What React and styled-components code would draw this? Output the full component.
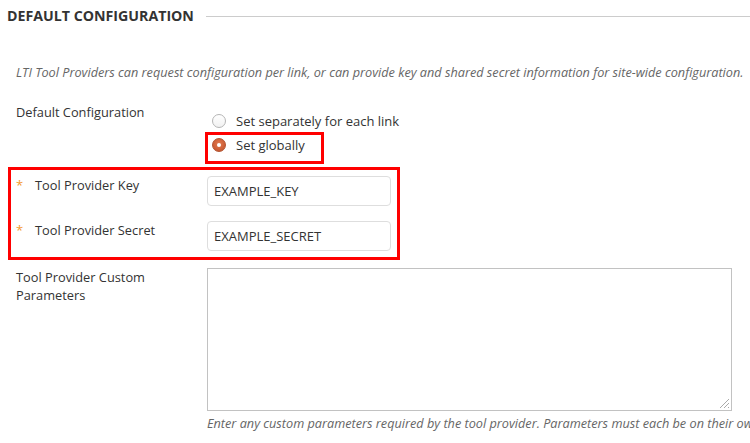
import React from "react";
import styled, { createGlobalStyle } from "styled-components";

const Global = createGlobalStyle`
  html, body { margin: 0; padding: 0; background: #fff; }
  body { font-family: "Open Sans", "Liberation Sans", sans-serif; color: #333; }
  * { box-sizing: border-box; }
`;

const Page = styled.div`
  width: 750px;
  height: 443px;
  overflow: hidden;
`;

const SectionHeader = styled.div`
  display: flex;
  align-items: center;
  padding: 6px 0 0 7px;
  height: 26px;
`;

const SectionTitle = styled.h2`
  margin: 0;
  font-size: 14.2px;
  font-weight: 700;
  line-height: 20px;
  color: #333;
  white-space: nowrap;
`;

const Rule = styled.div`
  flex: 1;
  height: 1px;
  background: #ccc;
  margin-left: 12px;
`;

const Description = styled.p`
  margin: 37px 0 0 16px;
  font-size: 12.7px;
  font-style: italic;
  line-height: 18px;
  color: #666;
  white-space: nowrap;
`;

const FieldRow = styled.div`
  display: flex;
  align-items: flex-start;
  margin-top: ${(p) => p.$top || 0}px;
  padding-left: ${(p) => (p.$inset ? 5 : 16)}px;
`;

const Label = styled.div`
  width: ${(p) => p.$width || 191}px;
  flex-shrink: 0;
  font-size: 12.8px;
  line-height: 18px;
  color: #333;
  padding-right: ${(p) => p.$pr || 0}px;
`;

const Required = styled.span`
  display: inline-block;
  width: 19px;
  color: #f39c2c;
  font-size: 13px;
`;

const RadioGroup = styled.div`
  display: flex;
  flex-direction: column;
  align-items: flex-start;
  margin-top: 8px;
`;

const Option = styled.label`
  display: flex;
  align-items: center;
  height: 20px;
  font-size: 13px;
  color: #333;
  padding-left: ${(p) => (p.$boxed ? 0 : 5)}px;
`;

const Radio = styled.span`
  width: 14px;
  height: 14px;
  border-radius: 50%;
  margin-right: 10px;
  flex-shrink: 0;
  position: relative;
  border: 1px solid ${(p) => (p.$checked ? "#b2522f" : "#b5b5b5")};
  background: ${(p) =>
    p.$checked
      ? "radial-gradient(circle at 50% 40%, #e07a50 0%, #cf6038 60%, #b9502c 100%)"
      : "linear-gradient(#ffffff, #f1f1f1)"};
  &::after {
    content: "";
    display: ${(p) => (p.$checked ? "block" : "none")};
    position: absolute;
    left: 50%;
    top: 50%;
    width: 4px;
    height: 4px;
    margin: -2px 0 0 -2px;
    border-radius: 50%;
    background: #fff;
  }
`;

const Highlight = styled.div`
  border: 3px solid #f00;
`;

const OptionBox = styled(Highlight)`
  width: 119px;
  margin-top: 1px;
  margin-left: -2px;
  padding: 0 0 6px 4px;
`;

const RequiredBox = styled(Highlight)`
  width: 392px;
  margin: 3px 0 0 8px;
  padding: 6px 0 6px 0;
  display: flex;
  flex-direction: column;
  gap: 15px;
`;

const TextInput = styled.div`
  width: 184px;
  height: 30px;
  border: 1px solid #dedede;
  border-radius: 4px;
  padding: 0 6px;
  display: flex;
  align-items: center;
  font-size: 13px;
  color: #333;
  background: #fff;
`;

const Field = styled.div`
  display: flex;
  flex-direction: column;
`;

const TextArea = styled.div`
  width: 525px;
  height: 143px;
  border: 1px solid #c2c2c2;
  position: relative;
  background: #fff;
`;

const Grip = styled.svg`
  position: absolute;
  right: 1px;
  bottom: 1px;
`;

const Help = styled.div`
  margin-top: 3px;
  font-size: 12.7px;
  font-style: italic;
  line-height: 18px;
  color: #666;
  white-space: nowrap;
`;

export default function App() {
  return (
    <Page>
      <Global />
      <SectionHeader>
        <SectionTitle>DEFAULT CONFIGURATION</SectionTitle>
        <Rule />
      </SectionHeader>
      <Description>
        LTI Tool Providers can request configuration per link, or can provide key and shared secret information for site-wide configuration.
      </Description>

      <FieldRow $top={22}>
        <Label>Default Configuration</Label>
        <RadioGroup>
          <Option>
            <Radio />
            Set separately for each link
          </Option>
          <OptionBox>
            <Option $boxed>
              <Radio $checked />
              Set globally
            </Option>
          </OptionBox>
        </RadioGroup>
      </FieldRow>

      <RequiredBox>
        <FieldRow $inset>
          <Label $width={191}>
            <Required>*</Required>Tool Provider Key
          </Label>
          <TextInput>EXAMPLE_KEY</TextInput>
        </FieldRow>
        <FieldRow $inset>
          <Label $width={191}>
            <Required>*</Required>Tool Provider Secret
          </Label>
          <TextInput>EXAMPLE_SECRET</TextInput>
        </FieldRow>
      </RequiredBox>

      <FieldRow $top={8}>
        <Label $pr={40}>Tool Provider Custom Parameters</Label>
        <Field>
          <TextArea>
            <Grip width="12" height="12" viewBox="0 0 12 12">
              <path d="M11 2 L2 11 M11 6 L6 11 M11 10 L10 11" stroke="#aaa" strokeWidth="1" fill="none" />
            </Grip>
          </TextArea>
          <Help>
            Enter any custom parameters required by the tool provider. Parameters must each be on their own line.
          </Help>
        </Field>
      </FieldRow>
    </Page>
  );
}
